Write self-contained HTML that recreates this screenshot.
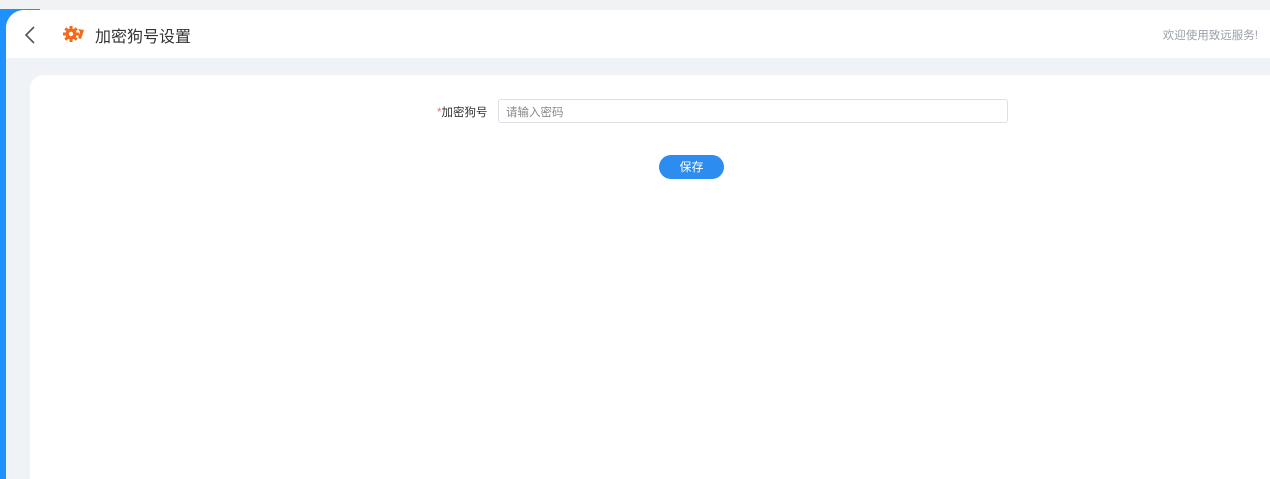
<!DOCTYPE html>
<html><head><meta charset="utf-8"><style>
*{margin:0;padding:0;box-sizing:border-box}
body{width:1270px;height:479px;overflow:hidden;background:#f1f2f4;font-family:"Liberation Sans","Noto Sans CJK SC",sans-serif;position:relative}
.blue{position:absolute;left:0;top:9px;width:40px;bottom:0;background:#1e90ff}
.main{position:absolute;left:6px;top:10px;right:0;bottom:0;background:#eff2f7;border-top-left-radius:18px;overflow:hidden}
.hdr{position:absolute;left:0;top:0;right:0;height:48px;background:#fff}
.title{position:absolute;left:89px;top:13px;font-size:16px;color:#333}
.welcome{position:absolute;right:12px;top:17px;font-size:11.5px;color:#9aa0a8}
.card{position:absolute;left:30px;top:75px;right:0;bottom:0;background:#fff;border-top-left-radius:14px}
.lbl{position:absolute;left:437px;top:104px;font-size:11.5px;color:#333}
.lbl b{color:#f56c6c;font-weight:normal}
.inp{position:absolute;left:498px;top:99px;width:510px;height:24px;border:1px solid #dcdfe6;border-radius:3px;background:#fff;font-size:11.5px;color:#888;padding:4px 7px}
.btn{position:absolute;left:659px;top:155px;width:65px;height:24px;background:#2d8cf0;border-radius:12px;color:#fff;font-size:12px;text-align:center;line-height:24px}
</style></head><body>
<div class="blue"></div>
<div class="main">
 <div class="hdr">
  <svg style="position:absolute;left:17px;top:16px" width="14" height="18" viewBox="0 0 14 18"><path d="M11 1L3 9l8 8" fill="none" stroke="#555" stroke-width="1.6"/></svg>
  <svg style="position:absolute;left:57px;top:14px" width="22" height="20" viewBox="0 0 22 20"><g fill="#f26b1d"><circle cx="8" cy="10" r="5.5"/><rect x="6.5" y="2" width="3" height="16"/><rect x="0" y="8.5" width="16" height="3"/><rect x="6.5" y="2" width="3" height="16" transform="rotate(45 8 10)"/><rect x="6.5" y="2" width="3" height="16" transform="rotate(-45 8 10)"/><path d="M15 5l6 1-3 9-3-1 2-6z"/></g><circle cx="8" cy="10" r="2.2" fill="#fff"/></svg>
  <div class="title">加密狗号设置</div>
  <div class="welcome">欢迎使用致远服务!</div>
 </div>
</div>
<div class="card"></div>
<div class="lbl"><b>*</b>加密狗号</div>
<div class="inp">请输入密码</div>
<div class="btn">保存</div>
</body></html>
